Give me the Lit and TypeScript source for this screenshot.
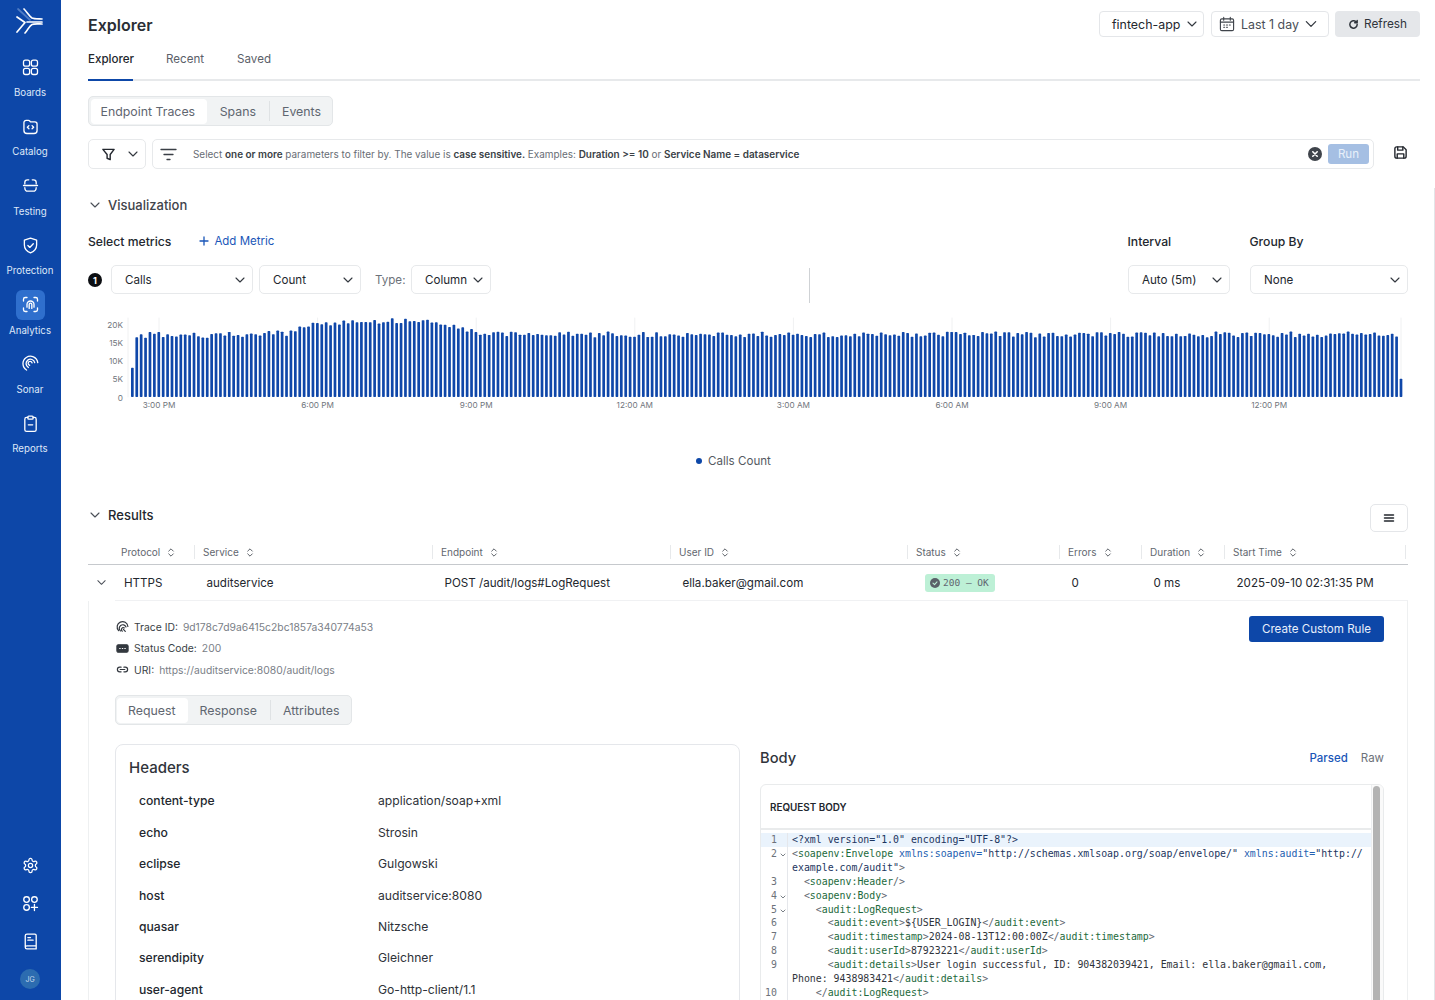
import { LitElement, html, css, svg } from "lit";
import { customElement } from "lit/decorators.js";

const chev = (cls = "chev") => html`<svg class=${cls} viewBox="0 0 12 12"><path d="M2 4l4 4 4-4" /></svg>`;
const sort = () => html`<svg class="sort" viewBox="0 0 8 12"><path d="M1.5 4.5L4 2l2.5 2.5M1.5 7.5L4 10l2.5-2.5" /></svg>`;

const navIcons: Record<string, unknown> = {
  Boards: svg`<rect x="4" y="3.500" width="7" height="7" rx="2.200" /><rect x="13" y="3.500" width="7" height="7" rx="2.200" /><rect x="4" y="13" width="7" height="7" rx="2.200" /><rect x="13" y="13" width="7" height="7" rx="2.200" />`,
  Catalog: svg`<path d="M4.500 7.500a2.500 2.500 0 0 1 2.500-2.500h2.600c.8 0 1.300.4 1.800 1l.6.7h5a2.500 2.500 0 0 1 2.500 2.500v7.300a3.500 3.500 0 0 1-3.500 3.500H8a3.500 3.500 0 0 1-3.500-3.500z" /><path d="M10.200 11l-1.800 1.800 1.800 1.800M13.800 11l1.800 1.800-1.800 1.800" />`,
  Testing: svg`<path d="M5.500 10V8.500a3 3 0 0 1 3-3h1.500M14 5.500h1.500a3 3 0 0 1 3 3V10M4 12h16M5.500 14.500c0 2.500 1.500 4 3.500 4h6c2 0 3.500-1.500 3.500-4" />`,
  Protection: svg`<path d="M12 3.500l7 2.300v5.700c0 4.300-2.800 7.300-7 9-4.200-1.700-7-4.700-7-9V5.800z" /><path d="M9 12l2.200 2.200L15.200 10" />`,
  Analytics: svg`<path d="M4 8V6a2 2 0 0 1 2-2h2M16 4h2a2 2 0 0 1 2 2v2M4 16v2a2 2 0 0 0 2 2h2M16 20h2a2 2 0 0 0 2-2v-2" /><path d="M8 15v-3a4 4 0 0 1 8 0v3M10.500 16.500V12a1.500 1.500 0 0 1 3 0v4.500" />`,
  Sonar: svg`<path d="M7.500 19.500A8.500 8.500 0 1 1 20.300 11" /><path d="M9.500 16.500A5 5 0 1 1 16.800 11" /><path d="M11 14a2.300 2.300 0 1 1 2.800-2.800" />`,
  Reports: svg`<path d="M9 5H7.500A2 2 0 0 0 5.500 7v12a2 2 0 0 0 2 2h9a2 2 0 0 0 2-2V7a2 2 0 0 0-2-2H15" /><rect x="9" y="3.500" width="6" height="3.500" rx="1" /><path d="M9.500 13.500h5" />`,
  gear: svg`<path d="M12.220 2h-.44a2 2 0 0 0-2 2v.18a2 2 0 0 1-1 1.730l-.43.250a2 2 0 0 1-2 0l-.15-.08a2 2 0 0 0-2.730.730l-.22.380a2 2 0 0 0 .73 2.730l.15.100a2 2 0 0 1 1 1.720v.510a2 2 0 0 1-1 1.740l-.15.090a2 2 0 0 0-.73 2.730l.22.380a2 2 0 0 0 2.730.730l.15-.08a2 2 0 0 1 2 0l.43.250a2 2 0 0 1 1 1.730V20a2 2 0 0 0 2 2h.44a2 2 0 0 0 2-2v-.18a2 2 0 0 1 1-1.730l.43-.250a2 2 0 0 1 2 0l.15.080a2 2 0 0 0 2.730-.730l.22-.390a2 2 0 0 0-.73-2.730l-.15-.08a2 2 0 0 1-1-1.740v-.5a2 2 0 0 1 1-1.740l.15-.090a2 2 0 0 0 .73-2.730l-.22-.380a2 2 0 0 0-2.730-.730l-.15.080a2 2 0 0 1-2 0l-.43-.250a2 2 0 0 1-1-1.730V4a2 2 0 0 0-2-2z" /><circle cx="12" cy="12" r="3" />`,
  apps: svg`<circle cx="7.500" cy="7.500" r="3.200" /><circle cx="16.500" cy="7.500" r="3.200" /><circle cx="7.500" cy="16.500" r="3.200" /><path d="M16.500 13v7M13 16.500h7" />`,
  book: svg`<path d="M6 18.500V5.500a2 2 0 0 1 2-2h9a1.500 1.500 0 0 1 1.500 1.500v12H7.800A1.900 1.900 0 0 0 6 18.500a2 2 0 0 0 2 2h10.500v-3.500" /><path d="M9 7.500h3M9 10.500h6" />`,
};
const navIcon = (k: string) => html`<svg class="nav-ic" viewBox="0 0 24 24">${navIcons[k]}</svg>`;

const nav = ["Boards", "Catalog", "Testing", "Protection", "Analytics", "Sonar", "Reports"];

function bars() {
  const stops: [number, number][] = [[131, 17], [205, 17], [290, 17.6], [305, 19.5], [340, 20.4], [430, 21.2], [445, 20.2], [470, 18], [490, 17.1], [1400, 17.2]];
  const out: { x: number; h: number }[] = [];
  let seed = 11;
  for (let i = 0; i < 289; i++) {
    const x = 131 + i * 4.405;
    let base = 17;
    for (let s = 0; s < stops.length - 1; s++) {
      if (x >= stops[s][0] && x <= stops[s + 1][0]) {
        const t = (x - stops[s][0]) / (stops[s + 1][0] - stops[s][0]);
        base = stops[s][1] + (stops[s + 1][1] - stops[s][1]) * t;
      }
    }
    seed = (seed * 16807) % 2147483647;
    const n = (seed % 1000) / 1000 - 0.5;
    let v = base + n * 1.6;
    if (i === 0) v = 8;
    if (i === 288) v = 5;
    out.push({ x, h: v * 3.65 });
  }
  return out;
}

const G = (t: unknown) => html`<span class="tg">${t}</span>`;
const A = (t: unknown) => html`<span class="at">${t}</span>`;
const P = (t: unknown) => html`<span class="pn">${t}</span>`;
const S = (t: unknown) => html`<span class="st">${t}</span>`;

const code: { n: string; fold?: boolean; active?: boolean; c: unknown }[] = [
  { n: "1", active: true, c: html`${S('<?xml version="1.0" encoding="UTF-8"?>')}` },
  { n: "2", fold: true, c: html`${P("<")}${G("soapenv:Envelope")} ${A("xmlns:soapenv=")}${S('"http://schemas.xmlsoap.org/soap/envelope/"')} ${A("xmlns:audit=")}${S('"http://')}` },
  { n: "", c: html`${S('example.com/audit"')}${P(">")}` },
  { n: "3", c: html`  ${P("<")}${G("soapenv:Header")}${P("/>")}` },
  { n: "4", fold: true, c: html`  ${P("<")}${G("soapenv:Body")}${P(">")}` },
  { n: "5", fold: true, c: html`    ${P("<")}${G("audit:LogRequest")}${P(">")}` },
  { n: "6", c: html`      ${P("<")}${G("audit:event")}${P(">")}\${USER_LOGIN}${P("</")}${G("audit:event")}${P(">")}` },
  { n: "7", c: html`      ${P("<")}${G("audit:timestamp")}${P(">")}2024-08-13T12:00:00Z${P("</")}${G("audit:timestamp")}${P(">")}` },
  { n: "8", c: html`      ${P("<")}${G("audit:userId")}${P(">")}87923221${P("</")}${G("audit:userId")}${P(">")}` },
  { n: "9", c: html`      ${P("<")}${G("audit:details")}${P(">")}User login successful, ID: 904382039421, Email: ella.baker@gmail.com,` },
  { n: "", c: html`Phone: 9438983421${P("</")}${G("audit:details")}${P(">")}` },
  { n: "10", c: html`    ${P("</")}${G("audit:LogRequest")}${P(">")}` },
];

const headers = [
  ["content-type", "application/soap+xml"],
  ["echo", "Strosin"],
  ["eclipse", "Gulgowski"],
  ["host", "auditservice:8080"],
  ["quasar", "Nitzsche"],
  ["serendipity", "Gleichner"],
  ["user-agent", "Go-http-client/1.1"],
];

const cols = ["Protocol", "Service", "Endpoint", "User ID", "Status", "Errors", "Duration", "Start Time"];
const ticks = ["3:00 PM", "6:00 PM", "9:00 PM", "12:00 AM", "3:00 AM", "6:00 AM", "9:00 AM", "12:00 PM"];

@customElement("app-root")
export class AppRoot extends LitElement {
  static styles = css`
    :host { display: block; height: 1000px; overflow: hidden; position: relative; background: #fff; font-family: Inter, "Liberation Sans", sans-serif; color: #23272e; font-size: 11.600px; }
    * { box-sizing: border-box; }
    svg { display: block; flex: none; fill: none; stroke: currentColor; stroke-linecap: round; stroke-linejoin: round; }
    .app { display: flex; height: 1000px; }

    .side { width: 61px; flex: none; background: #0d47a8; color: #e8eefa; display: flex; flex-direction: column; align-items: center; height: 1000px; padding-right: 1px; }
    .logo { width: 30px; height: 30px; margin-top: 7px; margin-bottom: 12px; stroke: #fff; stroke-width: 1.700; }
    .logo .faint { stroke: #4f7cc4; }
    .nav-item { display: flex; flex-direction: column; align-items: center; height: 59.400px; width: 60px; padding-top: 3px; font-size: 9.700px; line-height: 14px; color: #dfe8f8; white-space: nowrap; }
    .nav-box { width: 29px; height: 30px; display: flex; align-items: center; justify-content: center; border-radius: 6px; margin-bottom: 4px; }
    .nav-box.on { background: #2f6fcd; }
    .nav-ic { width: 21px; height: 21px; stroke-width: 1.500; color: #fff; }
    .side-bottom { margin-top: auto; display: flex; flex-direction: column; align-items: center; gap: 17px; padding-bottom: 11px; }
    .avatar { width: 20px; height: 20px; border-radius: 50%; background: #2c6cb0; color: #c6d8ec; font-size: 7px; display: flex; align-items: center; justify-content: center; }
    .side-ic { width: 21px; height: 21px; stroke-width: 1.500; color: #fff; }
    .side-ic.gear { width: 17px; height: 17px; margin: 2px 0; stroke-width: 1.800; }

    .main { flex: 1; min-width: 0; padding: 11px 15px 0 27px; }
    .top { display: flex; justify-content: space-between; align-items: center; height: 26px; }
    h1 { margin: 2px 0 0; font-size: 16px; font-weight: 600; color: #2a2e35; }
    .top-right { display: flex; gap: 7px; }
    .tsel { height: 26px; border: 1px solid #e4e6e9; border-radius: 4px; display: flex; align-items: center; font-size: 12.400px; color: #23272e; background: #fff; white-space: nowrap; }
    .t1 { width: 105px; padding-left: 12px; gap: 6px; }
    .t2 { width: 118px; padding-left: 7px; color: #4a4f57; gap: 6px; margin-right: -1px; }
    .cal { width: 16px; height: 16px; stroke-width: 1.200; color: #3f444b; }
    .t2 .chev { width: 14px; height: 14px; margin-left: -1px; }
    .refresh { width: 85px; height: 26px; background: #e5e7ea; border-radius: 4px; display: flex; align-items: center; justify-content: center; gap: 5px; font-size: 11.800px; color: #2f343b; }
    .refresh svg { width: 11px; height: 11px; stroke-width: 1.600; }
    .chev { width: 12px; height: 12px; stroke-width: 1.100; color: #33383f; }

    .tabs { margin-top: 11px; height: 33px; border-bottom: 2px solid #e7e9eb; display: flex; gap: 33px; font-size: 11.600px; color: #5b6069; }
    .tab { height: 33px; line-height: 22.500px; }
    .tab.on { width: 45px; white-space: nowrap; color: #23272e; font-weight: 500; border-bottom: 2px solid #0d47a8; }

    .seg { display: inline-flex; align-items: center; background: #f1f3f4; border: 1px solid #e3e6e8; border-radius: 5px; height: 30px; padding: 0 0 0 2px; font-size: 12.350px; color: #5f6670; }
    .seg-row { margin-top: 15px; height: 30px; }
    .seg span { display: flex; align-items: center; height: 25px; padding: 0 13px; }
    .seg .on { background: #fff; border-radius: 4px; padding: 0 11.500px 0 9.500px; }
    .seg .div { border-right: 1px solid #dfe2e4; height: 20px; }
    .seg .last { padding: 0 11px 0 12px; }
    .seg2 { padding-left: 1px; }
    .seg2 span { padding: 0 12.500px 0 12px; }
    .seg2 .on { padding: 0 12px 0 11px; }
    .seg2 .last { padding: 0 12px 0 12.500px; }

    .filter { margin-top: 13px; display: flex; height: 30px; align-items: stretch; }
    .fbtn { width: 58px; border: 1px solid #e7e9eb; border-radius: 5px; display: flex; align-items: center; padding-left: 12px; gap: 11px; }
    .fbtn .f { width: 15px; height: 15px; stroke-width: 1.500; color: #23272e; }
    .finput { width: 1222px; margin-left: 6px; border: 1px solid #e7e9eb; border-radius: 5px; display: flex; align-items: center; padding: 0 4px 0 7px; font-size: 9.940px; color: #686d75; white-space: nowrap; }
    .finput b { font-weight: 600; color: #3a3f46; }
    .finput .lines { width: 17px; height: 17px; stroke-width: 1.300; color: #3a3f46; margin-right: 16px; }
    .clear { margin-left: auto; width: 14px; height: 14px; stroke: none; }
    .run { width: 41px; height: 20px; background: #a5bfe3; color: #e8f0fa; border-radius: 3px; font-size: 11.600px; display: flex; align-items: center; justify-content: center; margin-left: 6px; }
    .save { width: 15px; height: 15px; margin: 6px 0 0 19px; stroke-width: 1.500; color: #23272e; }

    .sec { display: flex; align-items: center; height: 20px; margin-top: 26px; font-size: 13px; font-weight: 500; color: #3f444b; }
    .sec .chev { margin: 0 7px 0 1px; color: #4a4f57; }
    .metrics { display: flex; align-items: center; height: 20px; margin-top: 16px; font-weight: 500; font-size: 12.200px; }
    .add { display: flex; align-items: center; gap: 5px; margin-left: 28px; color: #1a56b8; font-weight: 400; font-size: 11.500px; }
    .add svg { width: 10px; height: 10px; stroke-width: 1.300; }
    .lab-i { margin-left: auto; width: 122px; font-weight: 500; }
    .lab-g { width: 170.500px; font-weight: 500; }

    .sels { display: flex; height: 29px; margin-top: 14px; align-items: flex-start; }
    .num { width: 14px; height: 14px; margin: 8px 9px 0 0; background: #0c0e12; color: #fff; font-size: 9px; font-weight: 700; border-radius: 50%; display: flex; align-items: center; justify-content: center; }
    .sel { height: 29px; border: 1px solid #e7e9eb; border-radius: 5px; display: flex; align-items: center; justify-content: space-between; padding: 0 6px 0 13px; color: #23272e; background: #fff; white-space: nowrap; }
    .w142 { width: 142px; } .w102 { width: 102px; margin-left: 6px; } .w80 { width: 80px; }
    .type { margin: 0 6px 0 14px; line-height: 30px; color: #6d727a; width: 30px; white-space: nowrap; }
    .vline { width: 1px; height: 35px; margin: 3px 0 0 318px; background: #cfd2d5; }
    .si { width: 102px; margin-left: 318px; }
    .sg { width: 158px; margin-left: 20px; }

    .chart { display: block; margin-top: 21px; width: 1320px; height: 100px; stroke: none; }
    .chart text { font-family: Inter, "Liberation Sans", sans-serif; font-size: 8.200px; fill: #70757c; stroke: none; }
    .legend { margin-top: 36px; height: 20px; display: flex; align-items: center; gap: 6px; padding-left: 608px; color: #555a62; }
    .dot { width: 6px; height: 6px; border-radius: 50%; background: #0d47a8; }

    .res { width: 1320px; display: flex; margin-top: 33px; height: 28px; font-size: 13px; font-weight: 500; color: #23272e; }
    .res-t { display: flex; align-items: center; height: 22px; }
    .res-t .chev { margin: 0 7px 0 1px; color: #4a4f57; }
    .menu { margin-left: auto; width: 38px; height: 28px; border: 1px solid #e4e6e9; border-radius: 5px; display: flex; align-items: center; justify-content: center; }
    .menu svg { width: 12px; height: 12px; stroke-width: 1.500; }

    .grid { display: grid; grid-template-columns: 107px 238px 238px 237px 152px 82px 83px 183px; width: 1320px; }
    .thead { margin-top: 8px; height: 25px; border-bottom: 1.500px solid #c6c9cd; font-size: 10px; color: #62676f; align-items: center; }
    .th { display: flex; align-items: center; gap: 7px; height: 14px; padding-left: 8px; border-right: 1px solid #e7e9eb; }
    .th:first-child { padding-left: 33px; }
    .th:last-child { margin-right: 2px; }
    .sort { width: 8px; height: 11px; stroke-width: 1; color: #4f545c; }
    .row { height: 36px; align-items: center; position: relative; color: #23272e; padding-bottom: 1px; }
    .row::after { content: ""; position: absolute; left: 27px; right: 0; bottom: 0; height: 1px; background: #f0f1f3; }
    .td { padding-left: 11.500px; white-space: nowrap; }
    .td:first-child { display: flex; align-items: center; padding-left: 8px; gap: 17px; }
    .td .chev { width: 11px; height: 11px; color: #4a4f57; }
    .badge { margin-left: 5.500px; width: 70px; height: 18px; background: #bdf0d6; border-radius: 3px; display: flex; align-items: center; padding-left: 5px; gap: 3px; font-family: "DejaVu Sans Mono", monospace; font-size: 9.500px; color: #5f6670; }
    .badge svg { width: 10px; height: 10px; stroke: none; }

    .detail { width: 1320px; border-left: 1px solid #eef0f1; border-right: 1px solid #eef0f1; padding: 15px 23px 0 26px; height: 500px; }
    .d-top { display: flex; justify-content: space-between; align-items: flex-start; }
    .info { font-size: 10.350px; color: #3a3f46; }
    .il { display: flex; align-items: center; height: 21.500px; white-space: nowrap; }
    .il svg { width: 13px; height: 13px; margin: 0 5px 0 1px; stroke-width: 1.300; color: #33383f; }
    .il i { font-style: normal; color: #7a8087; margin-left: 5px; }
    .cta { width: 135px; height: 26px; background: #0d47a8; color: #e8effb; border-radius: 3px; display: flex; align-items: center; justify-content: center; font-size: 11.600px; }
    .seg-row2 { margin-top: 14.500px; height: 30px; }

    .cols { display: flex; gap: 20px; margin-top: 19px; align-items: flex-start; }
    .hcard { width: 625px; height: 400px; border: 1px solid #e5e7eb; border-radius: 8px; padding: 12.500px 13px; }
    .htitle { font-size: 15px; font-weight: 500; line-height: 20px; color: #30343b; }
    .hrows { margin-top: 7.800px; padding-left: 10px; font-size: 12.150px; }
    .hr { display: flex; height: 31.400px; align-items: center; }
    .hr b { width: 239px; font-weight: 500; color: #23272e; }
    .hr span { color: #2e3238; }
    .bcol { width: 624px; }
    .bhead { display: flex; align-items: center; height: 20px; margin-top: 4px; font-size: 14.700px; font-weight: 500; color: #30343b; }
    .parsed { margin-left: auto; font-size: 11.500px; font-weight: 500; color: #1a56b8; }
    .raw { margin-left: 13px; font-size: 11.500px; font-weight: 400; color: #6d727a; }
    .bcard { margin-top: 16px; height: 300px; border: 1px solid #e9ebec; border-radius: 6px 6px 0 0; display: flex; overflow: hidden; }
    .bmain { flex: 1; min-width: 0; }
    .blabel { height: 45px; border-bottom: 2px solid #e9ebec; padding-left: 9px; display: flex; align-items: center; font-size: 9.900px; font-weight: 600; color: #23272e; }
    .sb { width: 12px; border-left: 1px solid #eceef0; background: #fafafa; padding: 1px 2px 0 1px; }
    .thumb { width: 7px; height: 290px; border-radius: 4px; background: #b3b3b3; }
    .code { padding-top: 3.400px; font-family: "DejaVu Sans Mono", monospace; font-size: 9.880px; line-height: 13.850px; color: #30343b; }
    .ln { display: flex; height: 13.850px; white-space: pre; }
    .ln.act .txt, .ln.act .gut { background: #eaf3fc; }
    .gut { width: 27px; flex: none; border-right: 1px solid #e5e7eb; color: #6d727a; position: relative; padding-left: 10px; }
    .gut.wide { padding-left: 4px; }
    .fold { position: absolute; left: 19px; top: 5px; width: 6px; height: 6px; stroke-width: 1; color: #7a8087; }
    .txt { flex: 1; padding-left: 4px; }
    .tg { color: #1d6a3c; }
    .at { color: #2460b0; }
    .st { color: #1c3560; }
    .pn { color: #5f6670; }
    .sbar { position: absolute; right: 0; top: 188px; bottom: 0; width: 1px; background: #e3e5e8; }
  `;

  render() {
    return html`
      <div class="app">
        <aside class="side">
          <svg class="logo" viewBox="0 0 30 30">
            <path class="faint" d="M3 2l12 11" />
            <path d="M2 10l8 5.500-8 9.500M9 2c3 3 5 7 8 9 2 1 7 .8 10 1M12 15h15M10 26c3-3 4-7 7-8.500 2-1 7-.5 10-.5" />
          </svg>
          ${nav.map((n) => html`<div class="nav-item"><div class="nav-box ${n === "Analytics" ? "on" : ""}">${navIcon(n)}</div>${n}</div>`)}
          <div class="side-bottom">
            <svg class="side-ic gear" viewBox="0 0 24 24">${navIcons.gear}</svg>
            <svg class="side-ic" viewBox="0 0 24 24">${navIcons.apps}</svg>
            <svg class="side-ic" viewBox="0 0 24 24">${navIcons.book}</svg>
            <div class="avatar">JG</div>
          </div>
        </aside>
        <main class="main">
          <div class="top">
            <h1>Explorer</h1>
            <div class="top-right">
              <div class="tsel t1">fintech-app ${chev()}</div>
              <div class="tsel t2">
                <svg class="cal" viewBox="0 0 17 17"><rect x="1.500" y="3" width="14" height="12.500" rx="1.500" /><path d="M1.500 6.500h14M5 1.500v3M12 1.500v3M5 9.500h1M8 9.500h1M11 9.500h1M5 12h1M8 12h1" /></svg>
                Last 1 day ${chev()}
              </div>
              <div class="refresh">
                <svg viewBox="0 0 12 12"><path d="M10 6a4 4 0 1 1-1.200-2.900L10 4.200M10 1.500v2.700H7.300" /></svg>
                Refresh
              </div>
            </div>
          </div>
          <div class="tabs"><div class="tab on">Explorer</div><div class="tab">Recent</div><div class="tab">Saved</div></div>
          <div class="seg-row">
            <div class="seg"><span class="on">Endpoint Traces</span><span class="div">Spans</span><span class="last">Events</span></div>
          </div>
          <div class="filter">
            <div class="fbtn">
              <svg class="f" viewBox="0 0 16 16"><path d="M2 2.500h12L9.800 8v5.500l-3.300-1.500V8z" /></svg>
              ${chev()}
            </div>
            <div class="finput">
              <svg class="lines" viewBox="0 0 17 17"><path d="M1 3.500h15M4 8.500h9M7 13.500h3" /></svg>
              <span>Select <b>one or more</b> parameters to filter by. The value is <b>case sensitive.</b> Examples: <b>Duration &gt;= 10</b> or <b>Service Name = dataservice</b></span>
              <svg class="clear" viewBox="0 0 14 14"><circle cx="7" cy="7" r="7" fill="#3f444b" /><path d="M4.800 4.800l4.400 4.400M9.200 4.800l-4.400 4.400" stroke="#fff" stroke-width="1.600" /></svg>
              <div class="run">Run</div>
            </div>
            <svg class="save" viewBox="0 0 16 16"><path d="M2 4a2 2 0 0 1 2-2h7l3 3v7a2 2 0 0 1-2 2H4a2 2 0 0 1-2-2z" /><path d="M5 2v3.500h5.500V2M4.500 14V9.500h7V14" /></svg>
          </div>

          <div class="sec">${chev()} Visualization</div>
          <div class="metrics">
            Select metrics
            <div class="add"><svg viewBox="0 0 10 10"><path d="M5 1v8M1 5h8" /></svg>Add Metric</div>
            <div class="lab-i">Interval</div>
            <div class="lab-g">Group By</div>
          </div>
          <div class="sels">
            <div class="num">1</div>
            <div class="sel w142">Calls ${chev()}</div>
            <div class="sel w102">Count ${chev()}</div>
            <div class="type">Type:</div>
            <div class="sel w80">Column ${chev()}</div>
            <div class="vline"></div>
            <div class="sel si">Auto (5m) ${chev()}</div>
            <div class="sel sg">None ${chev()}</div>
          </div>

          <svg class="chart" viewBox="88 315 1320 100">
            <line x1="128" x2="128" y1="318" y2="397" stroke="#f0f1f2" stroke-width="1" />
            ${ticks.map((_, i) => svg`<line x1=${159 + i * 158.6} x2=${159 + i * 158.6} y1="318" y2="397" stroke="#f0f1f2" stroke-width="1" />`)}
            <line x1="1401" x2="1401" y1="318" y2="397" stroke="#f0f1f2" stroke-width="1" />
            ${["20K", "15K", "10K", "5K", "0"].map((l, i) => svg`<text x="123" y=${327.5 + i * 18.25} text-anchor="end">${l}</text>`)}
            ${ticks.map((l, i) => svg`<text x=${159 + i * 158.6} y="408" text-anchor="middle">${l}</text>`)}
            ${bars().map((b) => svg`<rect x=${b.x} y=${397 - b.h} width="2.700" height=${b.h} rx="0.700" fill="#0f47a9" />`)}
          </svg>
          <div class="legend"><span class="dot"></span>Calls Count</div>

          <div class="res">
            <div class="res-t">${chev()} Results</div>
            <div class="menu"><svg viewBox="0 0 12 12"><path d="M1.500 3h9M1.500 6h9M1.500 9h9" /></svg></div>
          </div>
          <div class="grid thead">
            ${cols.map((c) => html`<div class="th">${c} ${sort()}</div>`)}
          </div>
          <div class="grid row">
            <div class="td">${chev()} HTTPS</div>
            <div class="td">auditservice</div>
            <div class="td">POST /audit/logs#LogRequest</div>
            <div class="td">ella.baker@gmail.com</div>
            <div class="td"><div class="badge"><svg viewBox="0 0 10 10"><circle cx="5" cy="5" r="5" fill="#5a6068" /><path d="M3 5.200l1.500 1.400L7 3.800" stroke="#bdf0d6" stroke-width="1.100" fill="none" /></svg>200 – OK</div></div>
            <div class="td">0</div>
            <div class="td">0 ms</div>
            <div class="td">2025-09-10 02:31:35 PM</div>
          </div>
          <div class="detail">
            <div class="d-top">
              <div class="info">
                <div class="il"><svg viewBox="0 0 14 14"><path d="M2.800 11.500A5.800 5.800 0 1 1 12.800 7" /><path d="M4.800 11.800A3.800 3.800 0 1 1 10.800 7.500" /><path d="M6.800 12A2 2 0 1 1 9 8.500" /><path d="M10 12.200L8 10" /></svg>Trace ID: <i>9d178c7d9a6415c2bc1857a340774a53</i></div>
                <div class="il"><svg viewBox="0 0 14 14"><rect x="1" y="3" width="12" height="8" rx="1.500" fill="currentColor" /><path d="M4 7h.500M6.800 7h.500M9.500 7h.500" stroke="#fff" /></svg>Status Code: <i>200</i></div>
                <div class="il"><svg viewBox="0 0 14 14"><path d="M5.500 4.500H4a2.500 2.500 0 0 0 0 5h1.500M8.500 4.500H10a2.500 2.500 0 0 1 0 5H8.500M4.500 7h5" /></svg>URI: <i>https://auditservice:8080/audit/logs</i></div>
              </div>
              <div class="cta">Create Custom Rule</div>
            </div>
            <div class="seg-row2">
              <div class="seg seg2"><span class="on">Request</span><span class="div">Response</span><span class="last">Attributes</span></div>
            </div>
            <div class="cols">
              <div class="hcard">
                <div class="htitle">Headers</div>
                <div class="hrows">
                  ${headers.map(([k, v]) => html`<div class="hr"><b>${k}</b><span>${v}</span></div>`)}
                </div>
              </div>
              <div class="bcol">
                <div class="bhead">Body<span class="parsed">Parsed</span><span class="raw">Raw</span></div>
                <div class="bcard">
                  <div class="bmain">
                    <div class="blabel">REQUEST BODY</div>
                    <div class="code">
                      ${code.map((l) => html`<div class="ln ${l.active ? "act" : ""}"><div class="gut ${l.n.length > 1 ? "wide" : ""}">${l.n}${l.fold ? html`<svg class="fold" viewBox="0 0 6 6"><path d="M1 2l2 2 2-2" /></svg>` : ""}</div><div class="txt">${l.c}</div></div>`)}
                    </div>
                  </div>
                  <div class="sb"><div class="thumb"></div></div>
                </div>
              </div>
            </div>
          </div>
        </main>
      </div>
      <div class="sbar"></div>
    `;
  }
}
